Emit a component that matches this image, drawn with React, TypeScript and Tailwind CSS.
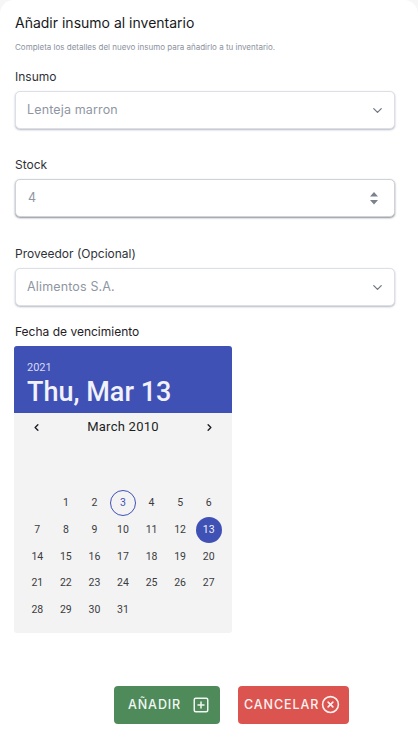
import { ChevronDown, ChevronLeft, ChevronRight, SquarePlus, CircleX } from "lucide-react";

const weeks = [
  ["", "1", "2", "3", "4", "5", "6"],
  ["7", "8", "9", "10", "11", "12", "13"],
  ["14", "15", "16", "17", "18", "19", "20"],
  ["21", "22", "23", "24", "25", "26", "27"],
  ["28", "29", "30", "31", "", "", ""],
];

function SelectField({ value }: { value: string }) {
  return (
    <div className="h-[38px] rounded-[5px] border border-[#dcdfe6] bg-white shadow-[0_1px_2px_rgba(90,100,120,0.45)] flex items-center justify-between pl-[11px] pr-[9px]">
      <span className="text-[12.5px] tracking-[0.15px] text-[#8f96a3]">{value}</span>
      <ChevronDown className="w-[15px] h-[15px] text-[#6f7682]" strokeWidth={2} />
    </div>
  );
}

function Day({ day }: { day: string }) {
  if (day === "3") {
    return (
      <div className="w-[26px] h-[26px] rounded-full border border-[#3f51b5] flex items-center justify-center text-[#3f51b5]">
        {day}
      </div>
    );
  }
  if (day === "13") {
    return (
      <div className="w-[26px] h-[26px] rounded-full bg-[#3f51b5] flex items-center justify-center text-[#f0f1fa]">
        {day}
      </div>
    );
  }
  return <span>{day}</span>;
}

export default function App() {
  return (
    <div className="w-[418px] h-[733px] bg-[#f6f6f6] overflow-hidden">
      <div className="h-full bg-white rounded-t-[14px] pl-[15px] pr-[23px] font-['Inter',sans-serif] text-[#2f3237]">
        <h1 className="pt-[14px] text-[14px] leading-[17px] text-[#17191c]">Añadir insumo al inventario</h1>
        <p className="mt-[10px] text-[8px] leading-[12px] text-[#8b929e]">
          Completa los detalles del nuevo insumo para añadirlo a tu inventario.
        </p>

        <label className="block mt-[16px] mb-[7px] text-[12px] leading-[15px]">Insumo</label>
        <SelectField value="Lenteja marron" />

        <label className="block mt-[28px] mb-[7px] text-[12px] leading-[15px]">Stock</label>
        <div className="h-[38px] rounded-[5px] border border-[#cfd2d8] bg-white shadow-[0_1px_2px_rgba(60,65,75,0.6)] flex items-center justify-between pl-[12px] pr-[15px]">
          <span className="text-[12.5px] text-[#8f96a3]">4</span>
          <svg width="10" height="16" viewBox="0 0 10 16" className="text-[#7c828d]">
            <path d="M5 2 L9 6.5 H1 Z M1 10 H9 L5 14.5 Z" fill="currentColor" />
          </svg>
        </div>

        <label className="block mt-[29px] mb-[7px] text-[12px] leading-[15px]">Proveedor (Opcional)</label>
        <SelectField value="Alimentos S.A." />

        <label className="block mt-[18px] mb-[7px] text-[12px] leading-[15px] text-[#1f2125]">Fecha de vencimiento</label>
        <div className="w-[218px] -ml-px rounded-[3px] overflow-hidden bg-[#f3f3f4] font-['Roboto',sans-serif]">
          <div className="h-[67px] bg-[#3f51b5] px-[13px] pt-[15px] text-[#f1f2fb]">
            <div className="text-[11px] leading-[14px] text-[#d5d9f0]">2021</div>
            <div className="text-[27px] leading-[32px] mt-[1px] font-medium">Thu, Mar 13</div>
          </div>
          <div className="h-[28px] flex items-center justify-between px-[17px] text-[#1c1e22]">
            <ChevronLeft className="w-[11px] h-[11px]" strokeWidth={3} />
            <span className="text-[13px] tracking-[0.25px]">March 2010</span>
            <ChevronRight className="w-[11px] h-[11px]" strokeWidth={3} />
          </div>
          <div className="pt-[49px] pb-[10px] px-[9px] text-[10.5px] text-[#3a3c40]">
            {weeks.map((week, i) => (
              <div key={i} className="grid grid-cols-7 h-[26.6px] items-center justify-items-center">
                {week.map((day, j) => (
                  <Day key={j} day={day} />
                ))}
              </div>
            ))}
          </div>
        </div>

        <div className="mt-[53px] ml-[99px] flex gap-[18px]">
          <button className="w-[106px] h-[38px] rounded-[4px] bg-[#4f8a5b] text-[#f2f7f3] flex items-center pl-[14px] gap-[11px] text-[12.5px] font-medium tracking-[0.9px]">
            AÑADIR
            <SquarePlus className="w-[18px] h-[18px]" strokeWidth={2} />
          </button>
          <button className="w-[111px] h-[38px] rounded-[4px] bg-[#dc5450] text-[#fdf2f1] flex items-center pl-[6px] gap-[2px] text-[12.5px] font-medium tracking-[0.9px]">
            CANCELAR
            <CircleX className="w-[19px] h-[19px]" strokeWidth={2} />
          </button>
        </div>
      </div>
    </div>
  );
}
